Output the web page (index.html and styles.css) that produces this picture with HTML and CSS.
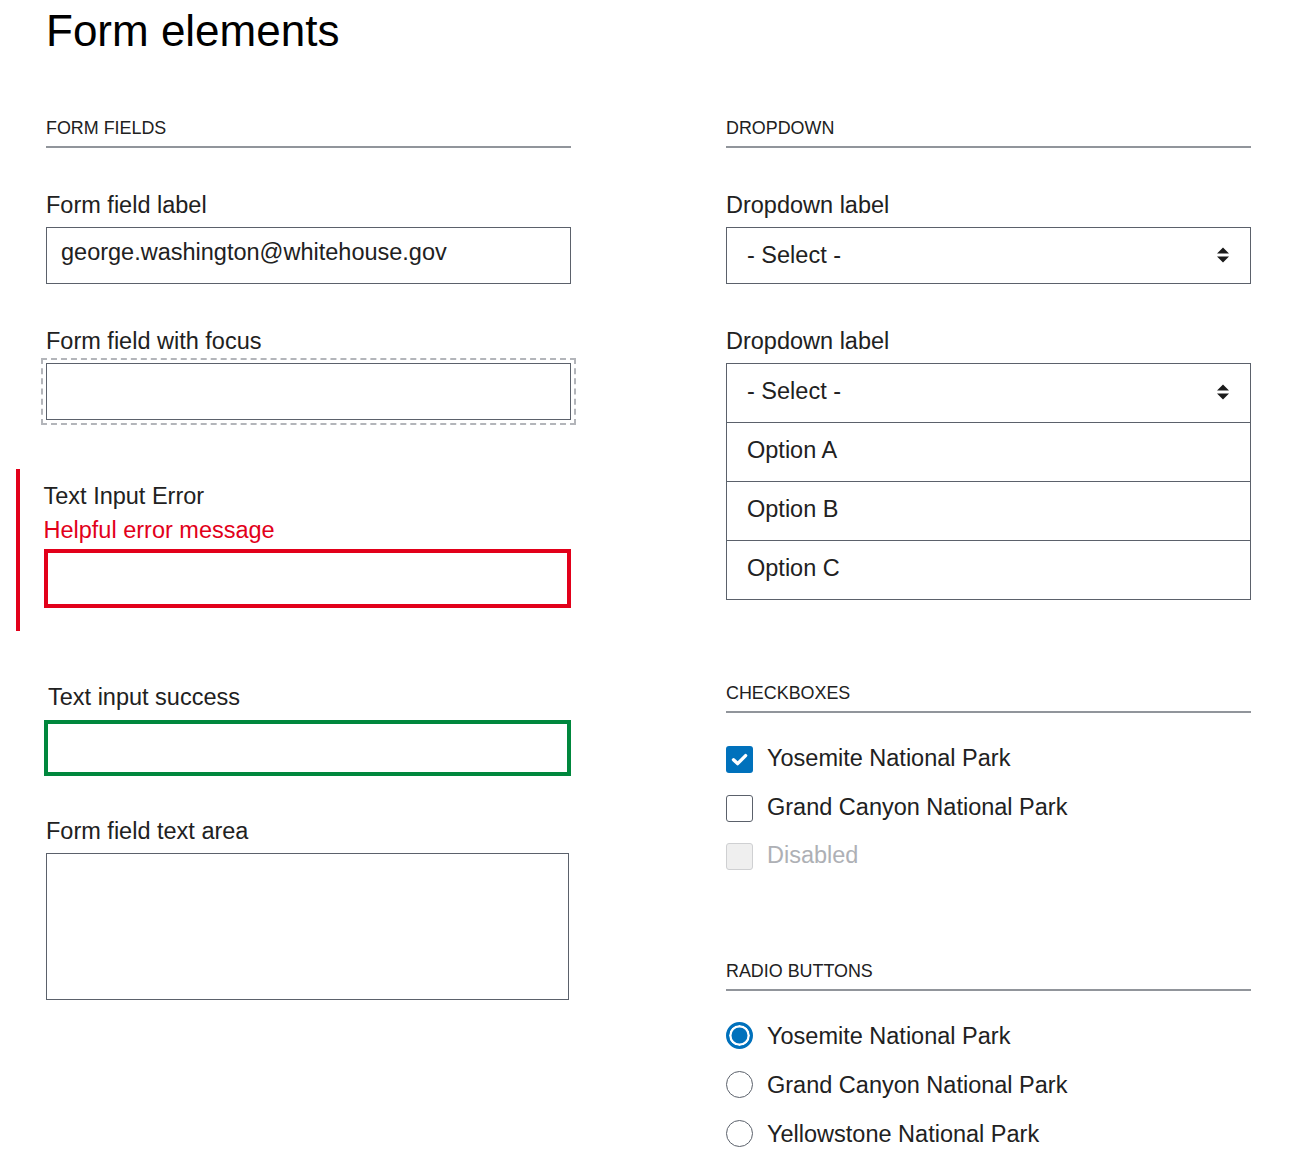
FILE: index.html
```html
<!DOCTYPE html>
<html lang="en">
<head>
<meta charset="utf-8">
<title>Form elements</title>
<link rel="stylesheet" href="styles.css">
</head>
<body>
<main class="page">
  <h1 class="title">Form elements</h1>
  <div class="columns">
    <section class="col">
      <h2 class="section-head">Form fields</h2>
      <div class="field">
        <label class="label" for="f1">Form field label</label>
        <input class="input" id="f1" type="text" value="george.washington@whitehouse.gov">
      </div>
      <div class="field">
        <label class="label" for="f2">Form field with focus</label>
        <input class="input input-focus" id="f2" type="text">
      </div>
      <div class="field-error">
        <label class="label" for="f3">Text Input Error</label>
        <span class="error-msg">Helpful error message</span>
        <input class="input input-error" id="f3" type="text">
      </div>
      <div class="field-success">
        <label class="label label-success" for="f4">Text input success</label>
        <input class="input input-success" id="f4" type="text">
      </div>
      <div class="field field-ta">
        <label class="label" for="f5">Form field text area</label>
        <textarea class="textarea" id="f5"></textarea>
      </div>
    </section>

    <section class="col">
      <h2 class="section-head">Dropdown</h2>
      <div class="field">
        <span class="label">Dropdown label</span>
        <div class="select">
          <span>- Select -</span>
          <svg class="arrows" width="14" height="18" viewBox="0 0 14 18"><path d="M1 7.5 L7 1.5 L13 7.5 Z M1 10.5 L7 16.5 L13 10.5 Z" fill="#1b1b1b"/></svg>
        </div>
      </div>
      <div class="field">
        <span class="label">Dropdown label</span>
        <div class="listbox">
          <div class="list-row list-head">
            <span>- Select -</span>
            <svg class="arrows" width="14" height="18" viewBox="0 0 14 18"><path d="M1 7.5 L7 1.5 L13 7.5 Z M1 10.5 L7 16.5 L13 10.5 Z" fill="#1b1b1b"/></svg>
          </div>
          <div class="list-row">Option A</div>
          <div class="list-row">Option B</div>
          <div class="list-row">Option C</div>
        </div>
      </div>

      <h2 class="section-head head-check">Checkboxes</h2>
      <ul class="choices choices-check">
        <li class="choice">
          <span class="box box-checked">
            <svg width="27" height="27" viewBox="0 0 27 27"><path d="M7.5 13.8 L11.6 17.6 L19.6 9.6" fill="none" stroke="#fff" stroke-width="3.4" stroke-linecap="round" stroke-linejoin="round"/></svg>
          </span>
          <span class="choice-text">Yosemite National Park</span>
        </li>
        <li class="choice">
          <span class="box"></span>
          <span class="choice-text">Grand Canyon National Park</span>
        </li>
        <li class="choice choice-disabled">
          <span class="box box-disabled"></span>
          <span class="choice-text">Disabled</span>
        </li>
      </ul>

      <h2 class="section-head head-radio">Radio buttons</h2>
      <ul class="choices choices-radio">
        <li class="choice">
          <span class="radio radio-checked"></span>
          <span class="choice-text">Yosemite National Park</span>
        </li>
        <li class="choice">
          <span class="radio"></span>
          <span class="choice-text">Grand Canyon National Park</span>
        </li>
        <li class="choice">
          <span class="radio"></span>
          <span class="choice-text">Yellowstone National Park</span>
        </li>
      </ul>
    </section>
  </div>
</main>
</body>
</html>
```

FILE: styles.css
```css
* { box-sizing: border-box; }

body {
  margin: 0;
  background: #fff;
  color: #212121;
  font-family: "Liberation Sans", Arial, Helvetica, sans-serif;
}

.page {
  padding: 5px 0 40px 46px;
}

.title {
  margin: 0;
  font-size: 44px;
  line-height: 52px;
  font-weight: normal;
  color: #000;
}

.columns {
  display: grid;
  grid-template-columns: 525px 525px;
  column-gap: 155px;
  margin-top: 60px;
  align-items: start;
}

.col {
  display: flex;
  flex-direction: column;
}

.section-head {
  margin: 0;
  font-size: 17.9px;
  line-height: 22px;
  font-weight: normal;
  text-transform: uppercase;
  padding-bottom: 7px;
  border-bottom: 2px solid #91959b;
}

.label {
  display: block;
  font-size: 23.5px;
  line-height: 30px;
}

.field {
  margin-top: 42px;
}

.input {
  display: block;
  width: 100%;
  height: 57px;
  margin: 7px 0 0;
  padding: 0 14px 6px;
  border: 1px solid #5b616b;
  border-radius: 0;
  background: #fff;
  color: #212121;
  font-family: inherit;
  font-size: 23.5px;
  outline: none;
}

.input-focus {
  outline: 2px dashed #b3b5ba;
  outline-offset: 3px;
}

.field-error {
  margin: 49px 0 0 -30px;
  width: 555px;
  border-left: 4.5px solid #e2001a;
  padding: 12px 0 23px 23.5px;
}

.error-msg {
  display: block;
  margin-top: 4px;
  color: #e2001a;
  font-size: 23.5px;
  line-height: 30px;
}

.input-error {
  height: 59px;
  margin-top: 4px;
  border: 4px solid #e2001a;
}

.field-success {
  margin-top: 51px;
}

.label-success {
  padding-left: 2px;
}

.input-success {
  width: 527px;
  height: 56px;
  margin: 8px 0 0 -2px;
  border: 4px solid #00873d;
}

.field-ta {
  margin-top: 40px;
}

.textarea {
  display: block;
  width: 523px;
  height: 147px;
  margin-top: 7px;
  border: 1px solid #5b616b;
  border-radius: 0;
  resize: none;
  font-family: inherit;
  font-size: 23.5px;
  outline: none;
}

/* dropdown */
.select {
  display: flex;
  align-items: center;
  justify-content: space-between;
  height: 57px;
  margin-top: 7px;
  padding: 0 20px 1px;
  border: 1px solid #5b616b;
  font-size: 23.5px;
}

.arrows {
  display: block;
  flex: none;
}

.listbox {
  margin-top: 7px;
  border: 1px solid #5b616b;
}

.list-row {
  display: flex;
  align-items: center;
  justify-content: space-between;
  height: 59px;
  padding: 0 20px 3px;
  font-size: 23.5px;
  border-top: 1px solid #5b616b;
}

.list-row.list-head {
  height: 58px;
  border-top: none;
}

/* choices */
.head-check {
  margin-top: 82px;
}

.head-radio {
  margin-top: 90px;
}

.choices {
  list-style: none;
  margin: 30px 0 0;
  padding: 0;
  display: flex;
  flex-direction: column;
}

.choices-check {
  gap: 18.5px;
}

.choices-radio {
  gap: 19px;
}

.choice {
  display: flex;
  align-items: flex-start;
  gap: 14px;
  font-size: 23.5px;
  line-height: 30px;
}

.choice-text {
  display: block;
}

.box {
  flex: none;
  width: 27px;
  height: 27px;
  margin-top: 3px;
  border: 1.5px solid #5b616b;
  border-radius: 3px;
  background: #fff;
}

.box svg {
  display: block;
}

.box-checked {
  border: none;
  background: #0071bc;
}

.box-disabled {
  border-color: #cfd0d2;
  background: #efefef;
}

.choice-disabled .choice-text {
  color: #aeb0b5;
}

.radio {
  flex: none;
  width: 27px;
  height: 27px;
  margin-top: 1px;
  border: 1.5px solid #5b616b;
  border-radius: 50%;
  background: #fff;
}

.radio-checked {
  border: 3.5px solid #0071bc;
  background: #0071bc;
  box-shadow: inset 0 0 0 2.5px #fff;
}
```
